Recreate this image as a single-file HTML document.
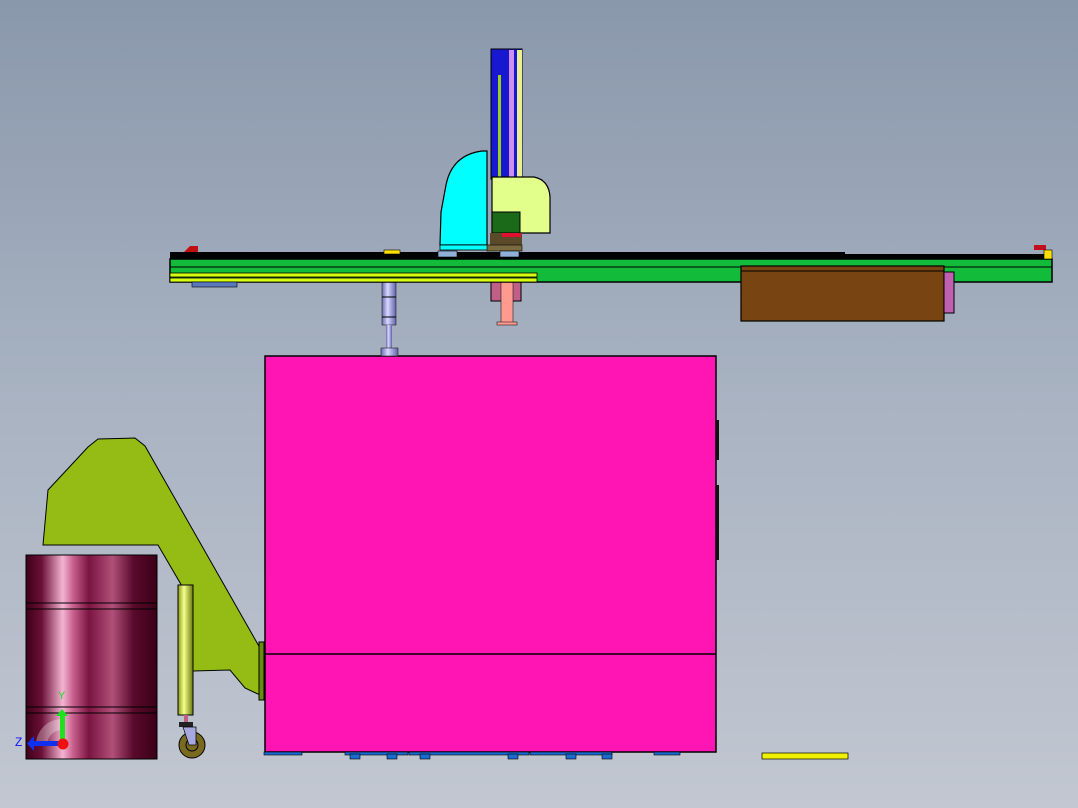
<!DOCTYPE html>
<html><head><meta charset="utf-8"><style>
html,body{margin:0;padding:0;width:1078px;height:808px;overflow:hidden;}
body{background:linear-gradient(#8a98ac,#a9b3c2 50%,#c2c7d1);}
svg{position:absolute;left:0;top:0}
</style></head><body>
<svg width="1078" height="808" viewBox="0 0 1078 808" font-family="Liberation Sans, sans-serif">
<defs>
<linearGradient id="barrel" x1="0" x2="1" y1="0" y2="0">
<stop offset="0" stop-color="#3e0018"/><stop offset=".12" stop-color="#6a1036"/>
<stop offset=".28" stop-color="#f4b4d2"/><stop offset=".36" stop-color="#c8608e"/>
<stop offset=".48" stop-color="#7a1440"/><stop offset=".66" stop-color="#b05078"/>
<stop offset=".82" stop-color="#5a0a2c"/><stop offset="1" stop-color="#3a0016"/></linearGradient>
<linearGradient id="tube" x1="0" x2="1"><stop offset="0" stop-color="#8a9a10"/><stop offset=".4" stop-color="#f4ff90"/><stop offset="1" stop-color="#6a7a08"/></linearGradient>
<linearGradient id="cyl" x1="0" x2="1"><stop offset="0" stop-color="#6a6ab0"/><stop offset=".4" stop-color="#d8d8ff"/><stop offset="1" stop-color="#6060a8"/></linearGradient>
</defs>
<!-- chute -->
<path d="M43,545 L48,490 L88,447 L98,439 L135,438 L145,446 L260,648 L260,695 L245,688 L230,670 L193,671 L193,605 L158,545 Z" fill="#94bc14" stroke="#000" stroke-width="1"/>
<!-- tube & wheel -->
<rect x="178" y="585" width="15" height="130" fill="url(#tube)" stroke="#000"/>
<rect x="184" y="715" width="4" height="8" fill="#c06080"/>
<rect x="179" y="722" width="14" height="5" fill="#222"/>
<circle cx="192" cy="745" r="13" fill="#7a6a20" stroke="#000"/>
<circle cx="192" cy="745" r="6" fill="none" stroke="#000"/>
<path d="M183,727 L196,727 L196,745 L189,745 Z" fill="#a8a8e0" stroke="#000" stroke-width=".7"/>
<!-- barrel -->
<rect x="26" y="555" width="131" height="204" fill="url(#barrel)" stroke="#000"/>
<rect x="26" y="603" width="131" height="6" fill="none" stroke="#000" stroke-width="1"/>
<rect x="26" y="707" width="131" height="6" fill="none" stroke="#000" stroke-width="1"/>
<!-- axis -->
<path d="M36,745 A26,26 0 0 1 62,719 L62,730 A15,15 0 0 0 47,745 Z" fill="#ffffff" opacity=".3"/>
<rect x="60" y="716" width="5" height="28" fill="#20e020"/>
<polygon points="56,716 62,709 68,716" fill="#20e020"/>
<rect x="34" y="741" width="28" height="5" fill="#1030f0"/>
<polygon points="34,736 27,743.5 34,751" fill="#1030f0"/>
<circle cx="63" cy="744" r="5.5" fill="#f01010"/>
<text x="58" y="699" font-size="11" fill="#20e020">Y</text>
<text x="15" y="746" font-size="12" fill="#1010ff">Z</text>
<!-- pink box -->
<rect x="265" y="356" width="451" height="396" fill="#ff14b4" stroke="#000" stroke-width="1.5"/>
<line x1="265" y1="654" x2="716" y2="654" stroke="#000" stroke-width="1.5"/>
<rect x="259" y="642" width="5" height="58" fill="#6a8a10" stroke="#000"/>
<rect x="716" y="420" width="3" height="40" fill="#111"/>
<rect x="716" y="485" width="3" height="75" fill="#111"/>
<!-- feet -->
<g fill="#1a6ad0" stroke="#000" stroke-width=".6">
<rect x="264" y="752" width="38" height="3"/><rect x="345" y="752" width="63" height="3"/>
<rect x="350" y="754" width="10" height="5"/><rect x="387" y="754" width="10" height="5"/>
<rect x="409" y="752" width="120" height="3"/><rect x="420" y="754" width="10" height="5"/><rect x="508" y="754" width="10" height="5"/>
<rect x="530" y="752" width="82" height="3"/><rect x="566" y="754" width="10" height="5"/><rect x="602" y="754" width="10" height="5"/>
<rect x="654" y="752" width="26" height="3"/></g>
<rect x="762" y="753" width="86" height="6" fill="#f0f000" stroke="#000" stroke-width=".7"/>
<!-- cylinder -->
<rect x="382" y="282" width="14" height="43" fill="url(#cyl)" stroke="#222" stroke-width=".6"/>
<line x1="382" y1="297" x2="396" y2="297" stroke="#000"/><line x1="382" y1="317" x2="396" y2="317" stroke="#000"/>
<rect x="386" y="325" width="6" height="23" fill="url(#cyl)"/>
<rect x="381" y="348" width="17" height="8" fill="url(#cyl)" stroke="#222" stroke-width=".6"/>
<!-- pink rod -->
<rect x="491" y="282" width="30" height="19" fill="#c06088" stroke="#000"/>
<rect x="501" y="282" width="12" height="41" fill="#ff9a90" stroke="#000" stroke-width=".5"/>
<rect x="497" y="322" width="20" height="3" fill="#ff9a90" stroke="#000" stroke-width=".5"/>
<!-- rail -->
<rect x="170" y="252" width="675" height="7" fill="#000"/>
<rect x="170" y="254" width="882" height="6" fill="#000"/>
<rect x="170" y="259" width="882" height="23" fill="#12bb3a" stroke="#000" stroke-width="1.5"/>
<line x1="170" y1="267" x2="1052" y2="267" stroke="#000"/>
<rect x="170" y="273" width="367" height="4" fill="#d8ff10" stroke="#000" stroke-width=".8"/>
<rect x="170" y="278" width="367" height="4" fill="#d8ff10" stroke="#000" stroke-width=".8"/>
<rect x="192" y="282" width="45" height="5" fill="#5a78c0" stroke="#000" stroke-width=".6"/>
<polygon points="184,252 190,246 198,246 198,252" fill="#c01010"/>
<rect x="1034" y="245" width="12" height="5" fill="#c01020"/>
<rect x="1044" y="250" width="8" height="9" fill="#ffe000" stroke="#000" stroke-width=".6"/>
<rect x="384" y="250" width="16" height="4" fill="#ffe000" stroke="#000" stroke-width=".6"/>
<!-- brown box -->
<rect x="741" y="266" width="203" height="55" fill="#784412" stroke="#000" stroke-width="1.2"/>
<line x1="741" y1="271" x2="944" y2="271" stroke="#000"/>
<rect x="944" y="272" width="10" height="41" fill="#c060b0" stroke="#000"/>
<!-- column -->
<rect x="491" y="49" width="31" height="130" fill="#1818d0" stroke="#000"/>
<rect x="498" y="75" width="3" height="104" fill="#9ad020"/>
<rect x="509" y="50" width="5" height="129" fill="#d090f0"/>
<rect x="517" y="50" width="5" height="129" fill="#e8f090"/>
<!-- cyan -->
<path d="M440,245 L441,212 L446,185 Q452,155 482,151 L487,151 L487,245 Z" fill="#00ffff" stroke="#000" stroke-width="1.2"/>
<rect x="440" y="245" width="48" height="5" fill="#00ffff" stroke="#000" stroke-width=".8"/>
<!-- yellow-green -->
<path d="M492,177 L534,177 Q549,180 550,197 L550,233 L492,233 Z" fill="#e2ff8c" stroke="#000" stroke-width="1.2"/>
<rect x="492" y="212" width="28" height="21" fill="#1a6a1a" stroke="#000"/>
<rect x="490" y="233" width="32" height="12" fill="#5a4a2a"/>
<rect x="502" y="233" width="19" height="4" fill="#e01030"/>
<rect x="487" y="245" width="35" height="6" fill="#7a6a40" stroke="#000" stroke-width=".6"/>
<rect x="438" y="251" width="19" height="6" fill="#90b0d8" stroke="#000" stroke-width=".6"/>
<rect x="500" y="251" width="19" height="6" fill="#90b0d8" stroke="#000" stroke-width=".6"/>
</svg>
</body></html>
